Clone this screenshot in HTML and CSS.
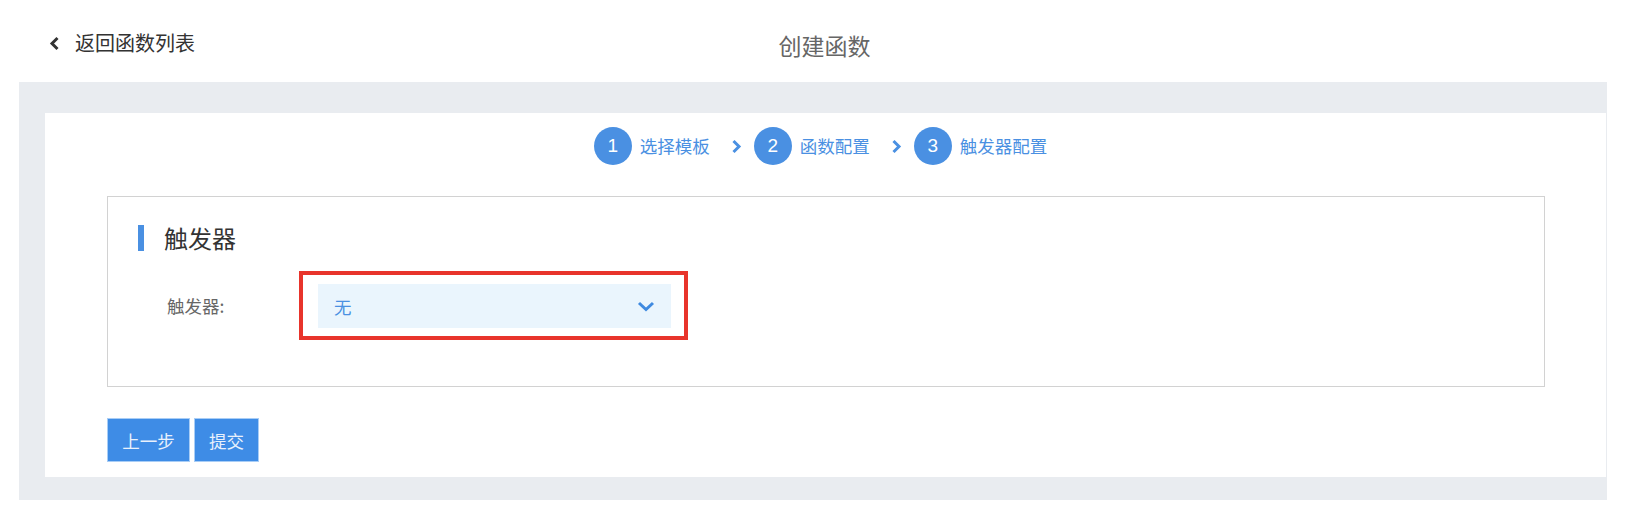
FILE: index.html
```html
<!DOCTYPE html>
<html lang="zh-CN">
<head>
<meta charset="utf-8">
<title>创建函数</title>
<link rel="stylesheet" href="styles.css">
</head>
<body>
<header class="top">
  <a class="back" href="#">
    <svg class="back-icon" width="11" height="15" viewBox="0 0 11 15"><polyline points="8.5,2 3,7.5 8.5,13" fill="none" stroke="#333" stroke-width="3" stroke-linejoin="miter"/></svg>
    <span>返回函数列表</span>
  </a>
  <h1 class="page-title">创建函数</h1>
  <div class="top-spacer"></div>
</header>
<main class="shell">
  <section class="card">
    <ol class="steps">
      <li class="step"><span class="step-num">1</span><span class="step-text">选择模板</span></li>
      <li class="step-sep"><svg width="11" height="15" viewBox="0 0 11 15"><polyline points="2.5,2 8,7.5 2.5,13" fill="none" stroke="#4a90e2" stroke-width="3"/></svg></li>
      <li class="step"><span class="step-num">2</span><span class="step-text">函数配置</span></li>
      <li class="step-sep"><svg width="11" height="15" viewBox="0 0 11 15"><polyline points="2.5,2 8,7.5 2.5,13" fill="none" stroke="#4a90e2" stroke-width="3"/></svg></li>
      <li class="step"><span class="step-num">3</span><span class="step-text">触发器配置</span></li>
    </ol>
    <div class="panel">
      <h2 class="panel-title">触发器</h2>
      <div class="form-row">
        <label class="form-label">触发器:</label>
        <div class="highlight">
          <div class="select">
            <span class="select-value">无</span>
            <svg class="select-arrow" width="18" height="11" viewBox="0 0 18 11"><polyline points="2,2 9,8.5 16,2" fill="none" stroke="#3f8ae0" stroke-width="3"/></svg>
          </div>
        </div>
      </div>
    </div>
    <div class="actions">
      <button class="btn btn-prev">上一步</button>
      <button class="btn btn-submit">提交</button>
    </div>
  </section>
</main>
</body>
</html>
```

FILE: styles.css
```css
* { box-sizing: border-box; }
html, body { margin: 0; padding: 0; background: #fff; }
body {
  width: 1630px;
  font-family: "Noto Sans CJK SC", "Noto Sans", sans-serif;
  color: #333;
}
.top {
  margin-left: 19px;
  height: 82px;
  padding-top: 6px;
  display: grid;
  grid-template-columns: 1fr auto 1fr;
  align-items: center;
}
.back {
  display: flex;
  align-items: center;
  gap: 15px;
  padding-left: 30px;
  color: #333;
  text-decoration: none;
  font-size: 20px;
  line-height: 28px;
  margin-top: -2px;
}
.back-icon { display: block; }
.page-title {
  margin: 2px 0 0;
  font-size: 23px;
  font-weight: 400;
  line-height: 30px;
  color: #666;
}
.shell {
  margin-left: 19px;
  width: 1588px;
  background: #e9ecf0;
  padding: 31px 1px 23px 26px;
}
.card {
  background: #fff;
  padding: 14px 0 15px;
}
.steps {
  list-style: none;
  margin: 0;
  padding: 0 10px 0 0;
  display: flex;
  justify-content: center;
  align-items: center;
  height: 38px;
}
.step { display: flex; align-items: center; gap: 8px; }
.step-num {
  width: 38px;
  height: 38px;
  border-radius: 50%;
  background: #4a90e2;
  color: #fff;
  display: flex;
  align-items: center;
  justify-content: center;
  font-family: "Liberation Sans", Arial, sans-serif;
  font-size: 19px;
}
.step-text {
  font-size: 17.5px;
  color: #4a90e2;
  line-height: 24px;
}
.step-sep {
  display: flex;
  align-items: center;
  margin: 0 12px 0 21px;
}
.panel {
  margin: 31px 61px 0 62px;
  border: 1px solid #d2d2d2;
  padding: 28px 30px 46px;
}
.panel-title {
  margin: 0;
  border-left: 6px solid #4a90e2;
  padding-left: 20px;
  font-size: 24px;
  line-height: 26px;
  font-weight: 400;
  color: #333;
}
.form-row {
  margin-top: 20px;
  display: flex;
  align-items: center;
}
.form-label {
  width: 161px;
  padding-left: 29px;
  font-size: 17.5px;
  color: #666;
  line-height: 24px;
}
.highlight {
  border: 4px solid #e8342b;
  padding: 9px 13px 8px 15px;
}
.select {
  width: 353px;
  height: 44px;
  background: #eaf5fd;
  display: flex;
  align-items: center;
  justify-content: space-between;
  padding: 0 16px 0 16px;
}
.select-value {
  font-size: 17.5px;
  color: #4a90e2;
}
.select-arrow { display: block; }
.actions {
  margin: 31px 0 0 62px;
  display: flex;
  gap: 4px;
}
.btn {
  height: 44px;
  border: 1px solid #a8cdf6;
  background: #3e8ce6;
  color: #e8f1fc;
  font-family: "Noto Sans CJK SC", sans-serif;
  font-size: 17.5px;
  padding: 0;
  cursor: pointer;
}
.btn-prev { width: 83px; }
.btn-submit { width: 65px; }
```
